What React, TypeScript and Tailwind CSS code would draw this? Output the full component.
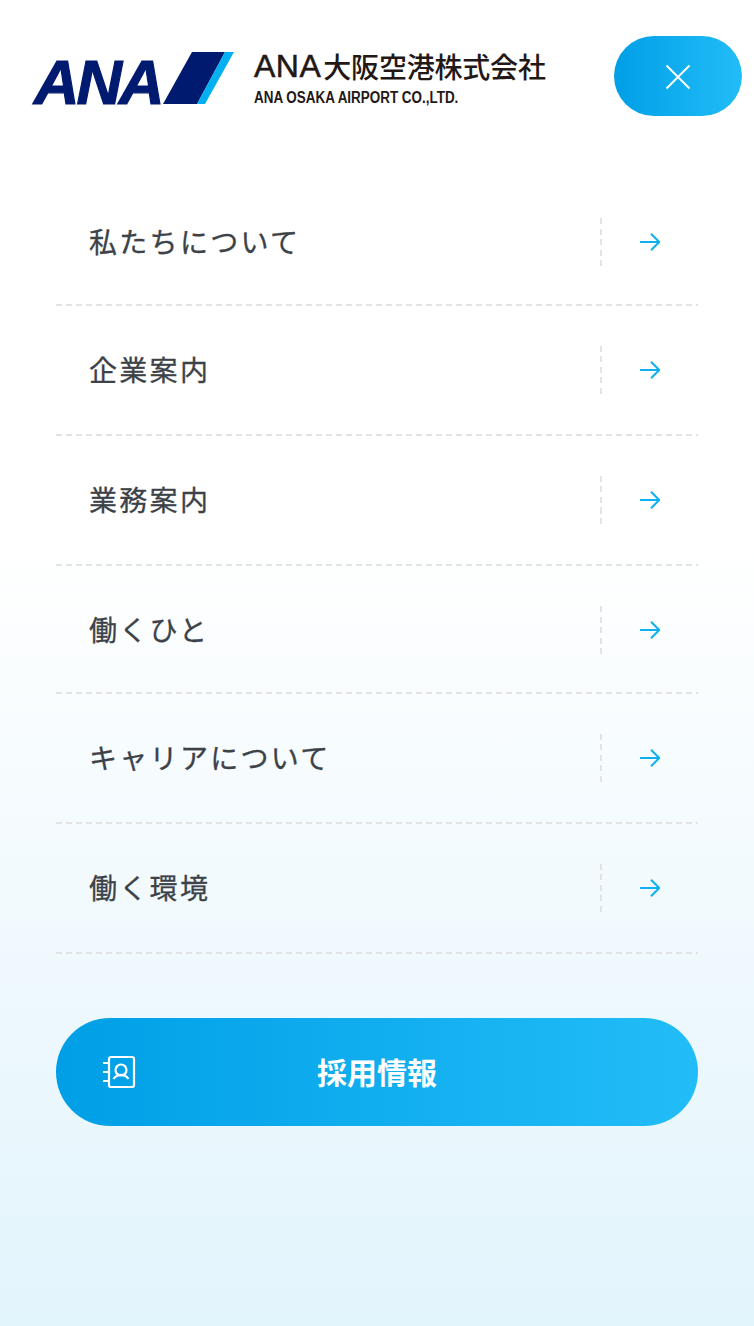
const jp = "font-['Noto_Sans_CJK_JP','Noto_Sans',sans-serif]";

const rows = [
  { label: "私たちについて", h: "h-[128px]" },
  { label: "企業案内", h: "h-[130px]" },
  { label: "業務案内", h: "h-[130px]" },
  { label: "働くひと", h: "h-[128px]" },
  { label: "キャリアについて", h: "h-[130px]" },
  { label: "働く環境", h: "h-[130px]" },
];

const Logo = () => (
  <div className="flex items-start">
    <div className="relative h-[52px] w-[202px]">
      <span className="absolute left-[2px] top-[-5px] font-['Liberation_Sans',sans-serif] text-[63px] leading-[70px] font-bold tracking-[-3px] text-[#001a70] italic [-webkit-text-stroke:1.200px_#001a70]">
        ANA
      </span>
      <svg className="absolute left-0 top-0" width="202" height="52" viewBox="0 0 202 52">
        <polygon points="131,52 160,0 193,0 165,52" fill="#001a70" />
        <polygon points="165,52 193,0 202,0 173,52" fill="#00b0f0" />
      </svg>
    </div>
    <div className="ml-[20px] flex flex-col">
      <div className="flex h-[28px] items-center whitespace-nowrap text-[#231815]">
        <span className="font-['Liberation_Sans',sans-serif] text-[32px] leading-[28px] tracking-[0.5px] [-webkit-text-stroke:0.5px_#231815]">
          ANA
        </span>
        <span className={`${jp} ml-[2px] text-[28px] leading-[28px] font-medium tracking-[-0.2px]`}>
          大阪空港株式会社
        </span>
      </div>
      <span className="mt-[10px] origin-left scale-x-[0.84] font-['Liberation_Sans',sans-serif] text-[16px] leading-[16px] font-bold whitespace-nowrap text-[#231815]">
        ANA OSAKA AIRPORT CO.,LTD.
      </span>
    </div>
  </div>
);

const ArrowIcon = () => (
  <svg width="20" height="18" viewBox="0 0 20 18" fill="none" stroke="#0fb0f0" strokeWidth="2">
    <path d="M0 9h19M11 .7 19.300 9 11 17.300" />
  </svg>
);

const NavRow = ({ label, h }: { label: string; h: string }) => (
  <a className={`${h} flex flex-col`}>
    <div className="mt-[40px] flex h-[48px] items-center">
      <span className={`${jp} flex-1 pb-[2px] pl-[33px] text-[28px] tracking-[2.300px] text-[#3c4248] [-webkit-text-stroke:0.3px_#3c4248]`}>{label}</span>
      <span className="flex h-full w-[98px] items-center justify-end bg-[repeating-linear-gradient(180deg,#e3e3e3_0_6px,transparent_6px_10.500px)] bg-[length:2px_100%] bg-no-repeat pr-[38px]">
        <ArrowIcon />
      </span>
    </div>
    <div className="mt-auto h-[2px] bg-[repeating-linear-gradient(90deg,#e3e3e3_0_6px,transparent_6px_10px)]" />
  </a>
);

const App = () => {
  return (
    <div className="flex min-h-[1326px] flex-col bg-[linear-gradient(180deg,#ffffff_0%,#ffffff_40%,#e2f4fc_100%)]">
      <header className="flex items-start justify-between pt-[36px] pr-[12px] pl-[32px]">
        <div className="pt-[16px]">
          <Logo />
        </div>
        <button className="flex h-[80px] w-[128px] items-center justify-center rounded-full bg-[linear-gradient(90deg,#009fe6,#22bdf8)]">
          <svg className="mt-[2px]" width="26" height="26" viewBox="0 0 26 26" stroke="#fff" strokeWidth="2">
            <path d="M1.500 1.500l23 23M24.500 1.500l-23 23" />
          </svg>
        </button>
      </header>
      <nav className="mx-[56px] mt-[62px] flex flex-col">
        {rows.map((r) => (
          <NavRow key={r.label} label={r.label} h={r.h} />
        ))}
      </nav>
      <a className="relative mx-[56px] mt-[64px] flex h-[108px] items-center justify-center rounded-full bg-[linear-gradient(90deg,#009fe6,#22bdf8)] pb-[2px]">
        <svg className="absolute left-[47px] top-[37px]" width="34" height="34" viewBox="0 0 34 34" fill="none" stroke="#fff" strokeWidth="2.200">
          <rect x="6" y="2" width="25" height="30" rx="2" />
          <circle cx="18" cy="15" r="5.500" />
          <path d="M10.500 24C12 21.500 15 19.800 18 19.800S24 21.500 25.500 24M0 8h6M0 17h6M0 26h6" />
        </svg>
        <span className={`${jp} text-[30px] font-bold text-white`}>採用情報</span>
      </a>
    </div>
  );
};

export default App;
